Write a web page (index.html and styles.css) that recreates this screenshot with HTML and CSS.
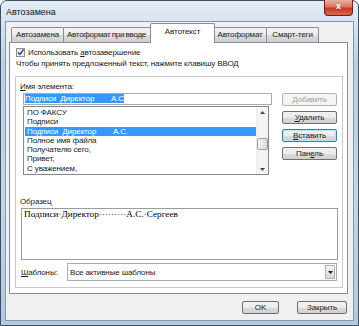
FILE: index.html
```html
<!DOCTYPE html>
<html lang="ru">
<head>
    <meta charset="UTF-8">
    <title>Автозамена</title>
    <link rel="stylesheet" href="styles.css">
</head>
<body>
    <div class="window">
        <div class="titlebar">
            <span class="title">Автозамена</span>
            <span class="close">x</span>
        </div>

        <div class="client">
            <div class="tabs">
                <span class="tab t1">Автозамена</span>
                <span class="tab t2">Автоформат при вводе</span>
                <span class="tab t3 active">Автотекст</span>
                <span class="tab t4">Автоформат</span>
                <span class="tab t5">Смарт-теги</span>
            </div>

            <div class="panel">
                <div class="check-row">
                    <span class="checkbox">
                        <svg width="7" height="7" viewBox="0 0 7 7"><path d="M1 3.5 L3 5.5 L6.5 0.5" fill="none" stroke="#2a3f8f" stroke-width="1.4"/></svg>
                    </span>
                    <span>Использовать <u>а</u>втозавершение</span>
                </div>
                <div class="hint">Чтобы принять предложенный текст, нажмите клавишу ВВОД</div>

                <div class="frame">
                    <div class="label"><u>И</u>мя элемента:</div>
                    <div class="entry">
                        <div class="entry-left">
                            <div class="input"><span class="sel">Подписи  Директор        А.С</span></div>
                            <div class="list">
                                <div class="items">
                                    <div class="item">ПО ФАКСУ</div>
                                    <div class="item">Подписи</div>
                                    <div class="item selected">Подписи  Директор        А.С.</div>
                                    <div class="item">Полное имя файла</div>
                                    <div class="item">Получателю сего,</div>
                                    <div class="item">Привет,</div>
                                    <div class="item">С уважением,</div>
                                </div>
                                <div class="scrollbar">
                                    <span class="arrow">
                                        <svg width="5" height="3" viewBox="0 0 5 3"><path d="M0 3 L2.5 0 L5 3 Z" fill="#444"/></svg>
                                    </span>
                                    <span class="track">
                                        <span class="thumb"></span>
                                    </span>
                                    <span class="arrow">
                                        <svg width="5" height="3" viewBox="0 0 5 3"><path d="M0 0 L2.5 3 L5 0 Z" fill="#444"/></svg>
                                    </span>
                                </div>
                            </div>
                        </div>
                        <div class="side-buttons">
                            <span class="btn disabled">Добавить</span>
                            <span class="btn"><u>У</u>далить</span>
                            <span class="btn default"><u>В</u>ставить</span>
                            <span class="btn">Пан<u>е</u>ль</span>
                        </div>
                    </div>

                    <div class="label preview-label">Образец</div>
                    <div class="preview">Подписи·Директор·········А.С.·Сергеев</div>

                    <div class="templates">
                        <span class="templates-label"><u>Ш</u>аблоны:</span>
                        <div class="select">
                            <span class="select-text">Все активные шаблоны</span>
                            <span class="select-btn">
                                <svg width="5" height="3" viewBox="0 0 5 3"><path d="M0 0 L2.5 3 L5 0 Z" fill="#222"/></svg>
                            </span>
                        </div>
                    </div>
                </div>
            </div>

            <div class="footer">
                <span class="btn ok">OK</span>
                <span class="btn close-btn">Закрыть</span>
            </div>
        </div>
    </div>
</body>
</html>
```

FILE: styles.css
```css
body {
    margin: 0;
    padding: 0;
    width: 359px;
    height: 326px;
    overflow: hidden;
    background: #ffffff;
    font-family: "Liberation Sans", Arial, sans-serif;
    font-size: 8px;
    letter-spacing: -0.12px;
    color: #1a1a1a;
}
.window {
    width: 359px;
    height: 326px;
    box-sizing: border-box;
    border: 1px solid #3b5068;
    border-radius: 7px 7px 0 0;
    background: linear-gradient(#e4edf6, #bcd0e3 20%, #c4d6e7 60%, #b4c9de);
    padding: 0 4px 4px 4px;
    display: flex;
    flex-direction: column;
}
.titlebar {
    height: 20px;
    display: flex;
    align-items: flex-start;
    justify-content: space-between;
}
.title {
    font-size: 9px;
    letter-spacing: 0;
    margin: 6px 0 0 1px;
    color: #111;
}
.close {
    width: 29px;
    height: 16px;
    margin: -1px 1px 0 0;
    box-sizing: border-box;
    border: 1px solid #6b2418;
    border-top: none;
    border-radius: 0 0 4px 4px;
    background: linear-gradient(#eab0a2, #d87561 45%, #c43b22 55%, #d9694a);
    color: #fff;
    font-weight: bold;
    font-size: 9px;
    text-align: center;
    line-height: 13px;
}
.client {
    flex: 1;
    background: #f0f0f0;
    border: 1px solid #8597ab;
    display: flex;
    flex-direction: column;
    padding: 1px 0 0 3px;
}
.tabs {
    display: flex;
    align-items: flex-end;
    height: 19px;
    padding-left: 2px;
    position: relative;
    z-index: 1;
}
.tab {
    box-sizing: border-box;
    height: 15px;
    border: 1px solid #898c95;
    border-bottom: none;
    margin-right: -1px;
    background: linear-gradient(#f3f3f3, #ebebeb 50%, #dddddd 51%, #cfcfcf);
    text-align: center;
    line-height: 14px;
    white-space: nowrap;
    border-radius: 2px 2px 0 0;
}
.t1 { width: 53px; }
.t2 { width: 89px; letter-spacing: -0.3px; word-spacing: -0.5px; padding-right: 2px; }
.t3 { width: 62px; }
.t4 { width: 54px; }
.t5 { width: 53px; }
.tab.active {
    height: 20px;
    margin: 0 -2px -1px -1px;
    width: 65px;
    background: #fff;
    line-height: 16px;
    position: relative;
    z-index: 2;
}
.panel {
    width: 339px;
    height: 252px;
    box-sizing: border-box;
    border: 1px solid #898c95;
    background: #fff;
    padding: 4px 4px 0 5px;
}
.check-row {
    display: flex;
    align-items: center;
    height: 11px;
    padding-left: 1px;
}
.checkbox {
    width: 9px;
    height: 9px;
    box-sizing: border-box;
    border: 1px solid #8f8f8f;
    background: linear-gradient(135deg, #e4e4e4, #fafafa);
    display: flex;
    align-items: center;
    justify-content: center;
    margin-right: 3px;
}
.hint {
    height: 11px;
    line-height: 11px;
    padding-left: 1px;
}
.frame {
    margin-top: 7px;
    width: 328px;
    height: 212px;
    box-sizing: border-box;
    border: 1px solid #c9c9c9;
    padding: 5px 0 0 0;
}
.label {
    height: 10px;
    line-height: 10px;
    padding-left: 4px;
}
.entry {
    display: flex;
    margin-top: 1px;
    padding-left: 7px;
}
.entry-left {
    width: 249px;
    display: flex;
    flex-direction: column;
}
.input {
    height: 12px;
    box-sizing: border-box;
    border: 1px solid #a5acb5;
    line-height: 10px;
    padding-left: 1px;
    white-space: pre;
}
.sel {
    background: #3399ff;
    color: #fff;
}
.list {
    margin-top: 1px;
    width: 246px;
    height: 69px;
    box-sizing: border-box;
    border: 1px solid #828790;
    display: flex;
}
.items {
    flex: 1;
    padding: 1px 0 0 1px;
}
.item {
    height: 9.3px;
    line-height: 9.3px;
    padding-left: 2px;
    white-space: pre;
}
.item.selected {
    background: #3399ff;
    color: #fff;
}
.scrollbar {
    width: 11px;
    display: flex;
    flex-direction: column;
    background: #f4f4f4;
    border-left: 1px solid #ececec;
}
.arrow {
    height: 10px;
    display: flex;
    align-items: center;
    justify-content: center;
}
.track {
    flex: 1;
    position: relative;
}
.thumb {
    position: absolute;
    left: 0;
    right: 0;
    top: 21px;
    height: 12px;
    box-sizing: border-box;
    border: 1px solid #9a9a9a;
    border-radius: 2px;
    background: linear-gradient(90deg, #f2f2f2, #dcdcdc);
}
.side-buttons {
    margin-left: 10px;
    display: flex;
    flex-direction: column;
    gap: 5px;
}
.btn {
    display: block;
    width: 55px;
    height: 13px;
    box-sizing: border-box;
    border: 1px solid #707070;
    border-radius: 2px;
    background: linear-gradient(#f2f2f2, #ebebeb 50%, #dddddd 51%, #cfcfcf);
    text-align: center;
    line-height: 11px;
}
.btn.disabled {
    color: #a0a0a0;
    border-color: #adb2b5;
    background: #f4f4f4;
}
.btn.default {
    border-color: #3c7fb1;
    box-shadow: inset 0 0 0 1px #b7e3f7;
}
.preview-label {
    margin-top: 22px;
}
.preview {
    margin: 1px 0 0 5px;
    width: 317px;
    height: 52px;
    box-sizing: border-box;
    border: 1px solid #9c9c9c;
    padding: 0 0 0 2px;
    font-family: "Liberation Serif", "Times New Roman", serif;
    font-size: 9.2px;
    letter-spacing: 0;
    line-height: 11px;
    white-space: pre;
    color: #000;
}
.templates {
    display: flex;
    align-items: center;
    margin-top: 3px;
    padding-left: 5px;
}
.templates-label {
    width: 46px;
}
.select {
    width: 270px;
    height: 18px;
    box-sizing: border-box;
    border: 1px solid #a5acb5;
    display: flex;
    align-items: center;
    justify-content: space-between;
}
.select-text {
    padding-left: 2px;
}
.select-btn {
    width: 10px;
    height: 14px;
    margin-right: 1px;
    box-sizing: border-box;
    border: 1px solid #b0b0b0;
    background: linear-gradient(#f2f2f2, #d8d8d8);
    display: flex;
    align-items: center;
    justify-content: center;
}
.footer {
    display: flex;
    margin-top: 7px;
    padding-left: 233px;
}
.btn.ok {
    width: 37px;
}
.btn.close-btn {
    width: 50px;
    margin-left: 18px;
}
```
